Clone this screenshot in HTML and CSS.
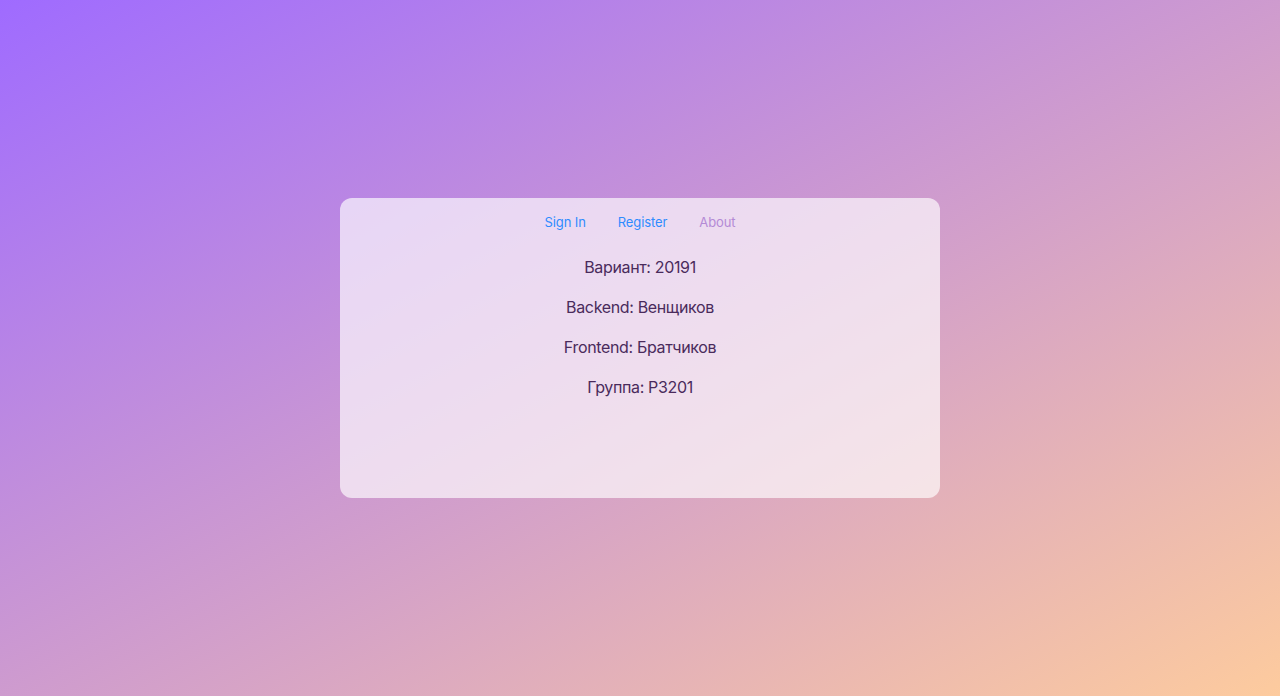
FILE: index.html
```html
<!DOCTYPE html>
<html lang="ru">
<head>
    <meta charset="UTF-8">
    <meta name="viewport" content="width=device-width, initial-scale=1.0">
    <title>About</title>
    <link rel="stylesheet" href="styles.css">
</head>
<body>
    <div class="card">
        <nav class="tabs">
            <a href="#" class="tab">Sign In</a>
            <a href="#" class="tab">Register</a>
            <a href="#" class="tab active">About</a>
        </nav>
        <div class="info">
            <p>Вариант: 20191</p>
            <p>Backend: Венщиков</p>
            <p>Frontend: Братчиков</p>
            <p>Группа: P3201</p>
        </div>
    </div>
</body>
</html>
```

FILE: styles.css
```css
html, body {
    height: 100%;
}
body {
    margin: 0;
    background: linear-gradient(to bottom right, #9f6bff, #fdcb9e);
    font-family: Inter, 'Noto Sans', sans-serif;
    display: flex;
    align-items: center;
    justify-content: center;
    overflow: hidden;
}
.card {
    width: 600px;
    height: 300px;
    box-sizing: border-box;
    background: rgba(255, 255, 255, 0.66);
    border-radius: 12px;
    padding-top: 14px;
    text-align: center;
}
.tabs {
    display: flex;
    justify-content: center;
    gap: 32px;
}
.tab {
    font-size: 13px;
    line-height: 20px;
    letter-spacing: -0.1px;
    color: #2f8cff;
    text-decoration: none;
}
.tab.active {
    color: #b48ad6;
}
.info {
    margin-top: 23px;
}
.info p {
    margin: 0 0 16px;
    font-size: 16px;
    line-height: 24px;
    letter-spacing: -0.35px;
    color: #4a2b5c;
}
```
